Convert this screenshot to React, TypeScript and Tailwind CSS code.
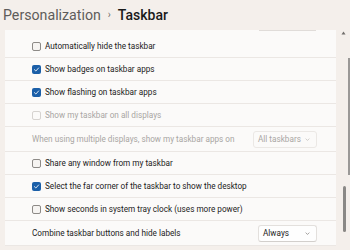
import type { ReactNode } from 'react';

type RowKind = 'check' | 'select';

type Row = {
  kind: RowKind;
  label: string;
  checked?: boolean;
  disabled?: boolean;
  value?: string;
  h: string;
};

const rows: Row[] = [
  { kind: 'check', label: 'Automatically hide the taskbar', h: 'h-[23px]' },
  { kind: 'check', label: 'Show badges on taskbar apps', checked: true, h: 'h-[23px]' },
  { kind: 'check', label: 'Show flashing on taskbar apps', checked: true, h: 'h-[23px]' },
  { kind: 'check', label: 'Show my taskbar on all displays', disabled: true, h: 'h-[23px]' },
  { kind: 'select', label: 'When using multiple displays, show my taskbar apps on', value: 'All taskbars', disabled: true, h: 'h-[25px]' },
  { kind: 'check', label: 'Share any window from my taskbar', h: 'h-[23px]' },
  { kind: 'check', label: 'Select the far corner of the taskbar to show the desktop', checked: true, h: 'h-[23px]' },
  { kind: 'check', label: 'Show seconds in system tray clock (uses more power)', h: 'h-[23px]' },
  { kind: 'select', label: 'Combine taskbar buttons and hide labels', value: 'Always', h: 'h-[25px]' },
];

function Checkbox({ checked, disabled }: { checked?: boolean; disabled?: boolean }) {
  if (checked) {
    return (
      <span className="flex h-[9px] w-[9px] shrink-0 items-center justify-center rounded-[2px] bg-[#1b5fa8]">
        <svg viewBox="0 0 10 10" className="h-[7px] w-[7px]" fill="none">
          <path d="M2 5.2 L4.1 7.2 L8 2.8" stroke="#ffffff" strokeWidth="1.2" strokeLinecap="round" strokeLinejoin="round" />
        </svg>
      </span>
    );
  }
  return (
    <span
      className={`h-[9px] w-[9px] shrink-0 rounded-[2px] border ${
        disabled ? 'border-[#d6d3d0] bg-[#fbfaf9]' : 'border-[#8d8a87] bg-[#f6f4f2]'
      }`}
    />
  );
}

function Chevron({ light }: { light?: boolean }) {
  return (
    <svg viewBox="0 0 8 8" className="h-[5px] w-[5px]" fill="none">
      <path d="M1.5 3 L4 5.5 L6.5 3" stroke={light ? '#b5b2af' : '#6d6a67'} strokeWidth="1" strokeLinecap="round" strokeLinejoin="round" />
    </svg>
  );
}

function Select({ value, disabled }: { value: string; disabled?: boolean }): ReactNode {
  return (
    <div
      className={`flex h-[17px] shrink-0 items-center justify-between rounded-[3px] border pl-[4px] pr-[6px] ${
        disabled
          ? 'w-[64px] border-[#ebe8e5] bg-[#fbfaf9] text-[#a9a6a3]'
          : 'w-[59px] border-[#e3e0dd] border-b-[#d2cfcc] bg-[#fefefe] text-[#1b1b1b]'
      }`}
    >
      <span className="whitespace-nowrap text-[8.2px] leading-none">{value}</span>
      <Chevron light={disabled} />
    </div>
  );
}

export default function App() {
  return (
    <div className="relative h-[250px] w-[350px] overflow-hidden bg-[#f4efeb] font-['Roboto',sans-serif]">
      {/* breadcrumb */}
      <div className="flex h-[30px] items-center gap-[7px] pl-[3px]">
        <span className="text-[14.2px] leading-none text-[#5e5c5a]">Personalization</span>
        <span className="text-[10px] leading-none text-[#6c6a68]">›</span>
        <span className="text-[14px] font-medium leading-none text-[#1a1a1a]">Taskbar</span>
      </div>

      <div className="flex">
        {/* card list */}
        <div className="ml-[5px] w-[331px] bg-[#fbfaf9]">
          <div className="flex h-[5px] justify-end pr-[20px]">
            <div className="h-[1px] w-[57px] bg-[#e0dcd9]" />
          </div>
          {rows.map((row) => (
            <div
              key={row.label}
              className={`flex ${row.h} items-center justify-between border-b border-[#ebe7e4] pl-[27px] pr-[19px] pt-[1px]`}
            >
              <div className="flex items-center gap-[4px]">
                {row.kind === 'check' && <Checkbox checked={row.checked} disabled={row.disabled} />}
                <span
                  className={`whitespace-nowrap text-[8.2px] leading-none ${row.disabled ? 'text-[#a9a6a3]' : 'text-[#1b1b1b]'}`}
                >
                  {row.label}
                </span>
              </div>
              {row.kind === 'select' && row.value && <Select value={row.value} disabled={row.disabled} />}
            </div>
          ))}
        </div>

        {/* scroll gutter */}
        <div className="relative w-[14px]">
          <svg viewBox="0 0 6 5" className="absolute left-[5px] top-[1px] h-[4px] w-[5px]">
            <path d="M3 0.5 L5.5 4.5 L0.5 4.5 Z" fill="#6f6d6b" />
          </svg>
          <div className="absolute left-[7px] top-[156px] h-[46px] w-[3px] rounded-full bg-[#8a8886]" />
          <div className="absolute left-[12px] top-[28px] h-[117px] w-[2px] bg-[#9a9896]" />
        </div>
      </div>
    </div>
  );
}
